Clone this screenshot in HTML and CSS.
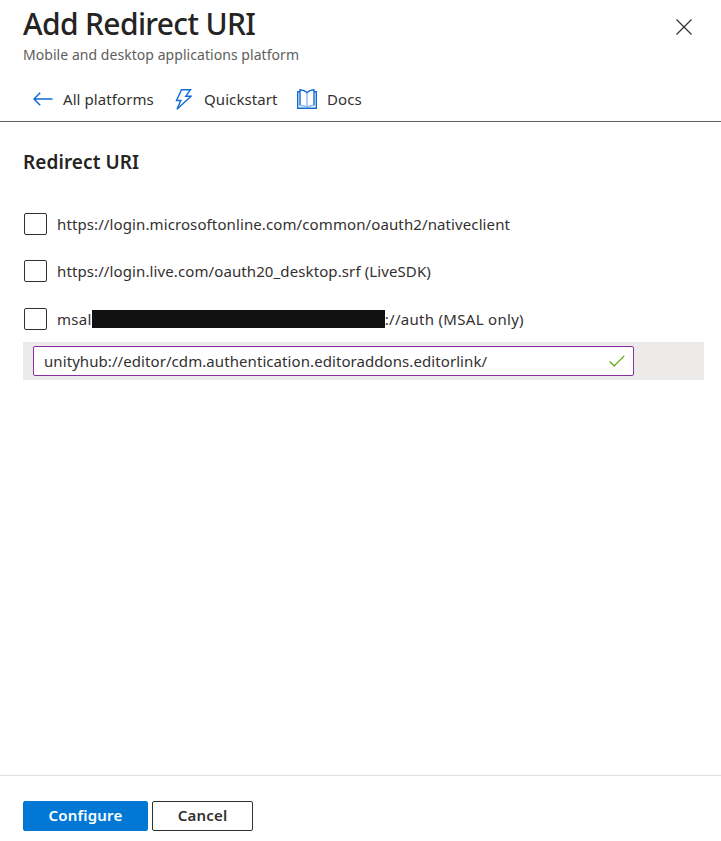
FILE: index.html
```html
<!DOCTYPE html>
<html>
<head>
    <title>Add Redirect URI</title>
    <meta charset="UTF-8">
    <link rel="stylesheet" href="styles.css">
</head>
<body>
    <div class="panel">
        <!-- Titre du panneau -->
        <header class="panel-header">
            <div>
                <h1 class="panel-title">Add Redirect URI</h1>
                <p class="panel-subtitle">Mobile and desktop applications platform</p>
            </div>
            <button class="close-btn" aria-label="Close">
                <svg width="16" height="16" viewBox="0 0 16 16"><path d="M0.5 0.5L15.5 15.5M15.5 0.5L0.5 15.5" stroke="#323130" stroke-width="1.2" fill="none"/></svg>
            </button>
        </header>

        <!-- Barre de commandes -->
        <nav class="toolbar">
            <a class="tool tool-back">
                <svg width="20" height="14" viewBox="0 0 20 14"><path d="M19.5 7H1M7.2 0.8L1 7L7.2 13.2" stroke="#0f6cd4" stroke-width="1.5" fill="none"/></svg>
                All platforms
            </a>
            <a class="tool tool-quick">
                <svg width="17" height="21" viewBox="0 0 17 21"><path d="M6.5 0.7H15.5L10.8 7.2H16L2 20.2L5.8 11.5H1.5Z" stroke="#0f6cd4" stroke-width="1.4" fill="none"/></svg>
                Quickstart
            </a>
            <a class="tool tool-docs">
                <svg width="20" height="20" viewBox="0 0 20 20">
                    <path d="M10 4V17.5M3.5 16.5C6 16.6 8.5 17 10 18C11.5 17 14 16.6 16.5 16.5" stroke="#8dbdf0" stroke-width="1.4" fill="none"/>
                    <path d="M3 2.7H0.7V19.3H19.3V2.7H17M3 16.5V0.8C6 1 8.5 2 10 3.5C11.5 2 14 1 17 0.8V16.5" stroke="#0f6cd4" stroke-width="1.4" fill="none"/>
                </svg>
                Docs
            </a>
        </nav>

        <main class="panel-body">
            <h2 class="section-title">Redirect URI</h2>

            <div class="uri-list">
                <label class="uri-row">
                    <span class="checkbox"></span>
                    <span>https://login.microsoftonline.com/common/oauth2/nativeclient</span>
                </label>
                <label class="uri-row">
                    <span class="checkbox"></span>
                    <span>https://login.live.com/oauth20_desktop.srf (LiveSDK)</span>
                </label>
                <label class="uri-row">
                    <span class="checkbox"></span>
                    <span class="masked-text">msal<span class="redacted"></span>://auth (MSAL only)</span>
                </label>
            </div>

            <div class="custom-uri">
                <div class="uri-input">
                    <span>unityhub://editor/cdm.authentication.editoraddons.editorlink/</span>
                    <svg width="16" height="12" viewBox="0 0 16 12"><path d="M0.7 6.5L5.2 11L15.3 0.8" stroke="#57a300" stroke-width="1.2" fill="none"/></svg>
                </div>
            </div>
        </main>

        <footer class="panel-footer">
            <button class="btn btn-primary">Configure</button>
            <button class="btn">Cancel</button>
        </footer>
    </div>
</body>
</html>
```

FILE: styles.css
```css
html, body {
    margin: 0;
    height: 100%;
}
body {
    font-family: "Noto Sans", "Open Sans", Arial, sans-serif;
    color: #323130;
    background: #fff;
    overflow: hidden;
}
.panel {
    height: 841px;
    display: flex;
    flex-direction: column;
}
.panel-header {
    display: flex;
    justify-content: space-between;
    align-items: flex-start;
    padding: 0 29px 0 23px;
    height: 76px;
}
.panel-title {
    margin: 0;
    font-size: 30px;
    line-height: 47px;
    font-weight: 500;
    color: #252423;
    letter-spacing: -0.65px;
}
.panel-subtitle {
    margin: 0;
    font-size: 14px;
    line-height: 16px;
    color: #605e5c;
    letter-spacing: 0.05px;
}
.close-btn {
    border: none;
    background: none;
    padding: 0;
    margin-top: 19px;
    height: 16px;
    display: block;
}
.toolbar {
    display: flex;
    align-items: center;
    height: 44px;
    padding: 1px 0 0 33px;
    border-bottom: 1px solid #605e5c;
    font-size: 15px;
    letter-spacing: 0.08px;
}
.tool {
    display: flex;
    align-items: center;
    color: #323130;
}
.tool-back {
    gap: 10px;
    width: 142px;
}
.tool-quick {
    gap: 12px;
    width: 122px;
}
.tool-docs {
    gap: 10px;
}
.panel-body {
    flex: 1;
    padding: 0 17px 0 23px;
}
.section-title {
    margin: 26px 0 0;
    font-size: 19px;
    line-height: 28px;
    font-weight: 600;
    color: #252423;
    letter-spacing: 0.08px;
}
.uri-list {
    margin-top: 36px;
    display: flex;
    flex-direction: column;
    gap: 24.5px;
}
.uri-row {
    display: flex;
    align-items: center;
    gap: 10px;
    height: 23px;
    font-size: 15px;
    letter-spacing: 0.107px;
}
.checkbox {
    width: 21px;
    height: 20px;
    margin-left: 1px;
    border: 1px solid #323130;
    border-radius: 2px;
    flex: none;
}
.masked-text {
    display: flex;
    align-items: center;
    letter-spacing: 0.3px;
}
.redacted {
    width: 293px;
    height: 18px;
    background: #111;
    flex: none;
}
.custom-uri {
    margin-top: 12px;
    background: #edebe9;
    padding: 4px 0 4px 10px;
    height: 30px;
}
.uri-input {
    width: 599px;
    height: 28px;
    border: 1px solid #8a2da5;
    border-radius: 2px;
    background: #fff;
    display: flex;
    align-items: center;
    justify-content: space-between;
    font-size: 15px;
    letter-spacing: 0.075px;
}
.uri-input span {
    padding-left: 10px;
}
.uri-input svg {
    margin-right: 8px;
}
.panel-footer {
    box-sizing: border-box;
    border-top: 1px solid #e1dfdd;
    height: 66px;
    padding: 25px 0 0 23px;
    display: flex;
    align-items: flex-start;
    gap: 4px;
}
.btn {
    height: 30px;
    width: 101px;
    box-sizing: border-box;
    border: 1px solid #323130;
    border-radius: 2px;
    background: #fff;
    color: #323130;
    font-family: inherit;
    font-size: 15px;
    font-weight: 600;
    letter-spacing: 0.2px;
    padding: 0 0 2px;
}
.btn-primary {
    width: 125px;
    background: #0078d4;
    border-color: #0078d4;
    color: #fff;
}
```
